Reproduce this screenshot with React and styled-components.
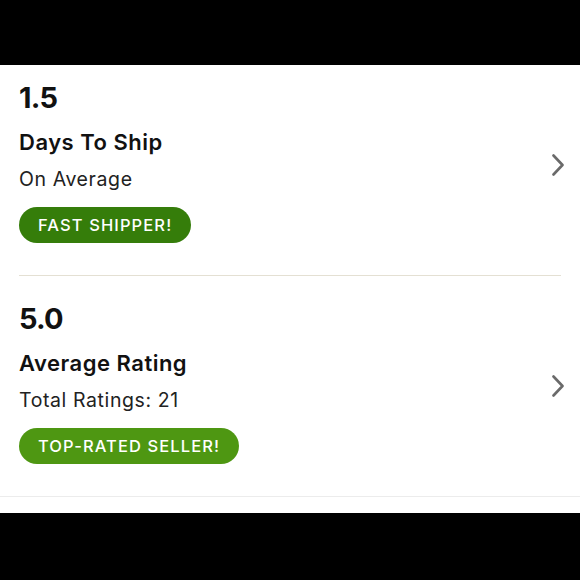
import React from "react";
import styled, { createGlobalStyle } from "styled-components";

const GlobalStyle = createGlobalStyle`
  html, body {
    margin: 0;
    padding: 0;
    background: #000;
  }
  body {
    font-family: "Inter", "Noto Sans", sans-serif;
  }
`;

const Screen = styled.div`
  width: 580px;
  height: 580px;
  display: flex;
  flex-direction: column;
  background: #000;
  overflow: hidden;
`;

const TopBar = styled.div`
  height: 65px;
  flex-shrink: 0;
`;

const Sheet = styled.div`
  background: #fff;
  display: flex;
  flex-direction: column;
  padding-bottom: 16px;
`;

const StatRow = styled.div`
  display: flex;
  align-items: center;
  padding: ${(p) => p.$top}px 15px 32px 19px;
`;

const Divider = styled.div`
  height: 1px;
  background: ${(p) => (p.$inset ? "#e4e0d3" : "#ececec")};
  margin: 0 ${(p) => (p.$inset ? "19px" : "0")};
`;

const StatBody = styled.div`
  flex: 1;
  display: flex;
  flex-direction: column;
  align-items: flex-start;
`;

const Value = styled.div`
  font-size: 29px;
  line-height: 36px;
  font-weight: 700;
  color: #111;
  letter-spacing: -0.8px;
`;

const Title = styled.div`
  margin-top: 12px;
  font-size: 22px;
  line-height: 28px;
  font-weight: 600;
  color: #111;
  letter-spacing: 0.5px;
`;

const Subtitle = styled.div`
  margin-top: 11px;
  font-size: 19.5px;
  line-height: 24px;
  font-weight: 400;
  color: #222;
  letter-spacing: 0.6px;
`;

const Badge = styled.div`
  margin-top: 16px;
  height: 36px;
  display: flex;
  align-items: center;
  padding: 0 19px;
  border-radius: 18px;
  background: ${(p) => p.$color};
  color: #fff;
  font-size: 16.5px;
  font-weight: 500;
  letter-spacing: 1.1px;
`;

const Chevron = styled.svg`
  width: 14px;
  height: 22px;
  flex-shrink: 0;
  margin-top: 7px;
`;

const Arrow = () => (
  <Chevron viewBox="0 0 14 22">
    <path
      d="M2.5 1.5 L11.5 11 L2.5 20.5"
      fill="none"
      stroke="#6a6a6a"
      strokeWidth="2.6"
      strokeLinecap="round"
      strokeLinejoin="round"
    />
  </Chevron>
);

const stats = [
  {
    value: "1.5",
    title: "Days To Ship",
    subtitle: "On Average",
    badge: "FAST SHIPPER!",
    color: "#357d0a",
    top: 15,
    inset: true,
  },
  {
    value: "5.0",
    title: "Average Rating",
    subtitle: "Total Ratings: 21",
    badge: "TOP-RATED SELLER!",
    color: "#4e9712",
    top: 25,
    inset: false,
  },
];

export default function App() {
  return (
    <Screen>
      <GlobalStyle />
      <TopBar />
      <Sheet>
        {stats.map((s) => (
          <React.Fragment key={s.value}>
            <StatRow $top={s.top}>
              <StatBody>
                <Value>{s.value}</Value>
                <Title>{s.title}</Title>
                <Subtitle>{s.subtitle}</Subtitle>
                <Badge $color={s.color}>{s.badge}</Badge>
              </StatBody>
              <Arrow />
            </StatRow>
            <Divider $inset={s.inset} />
          </React.Fragment>
        ))}
      </Sheet>
    </Screen>
  );
}
